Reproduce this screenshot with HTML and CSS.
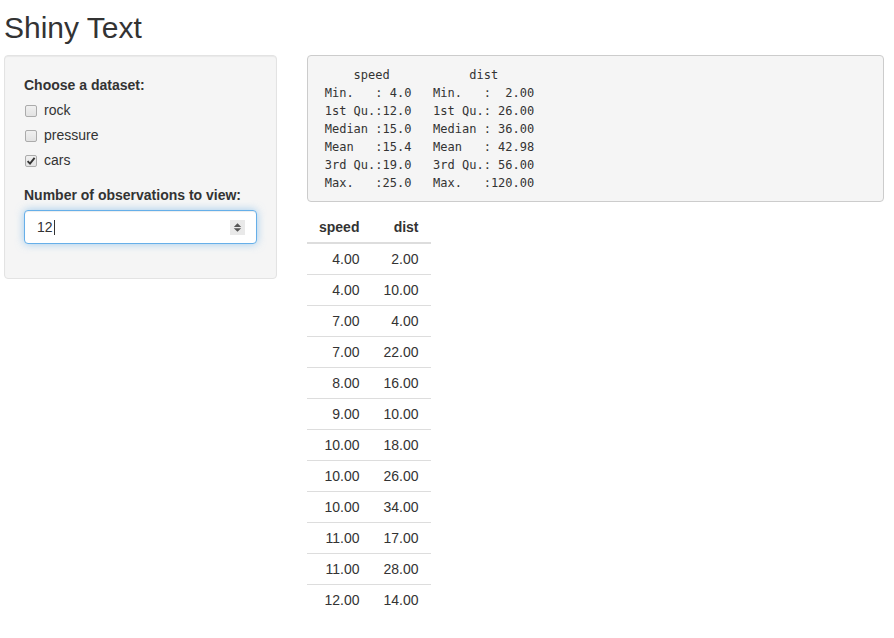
FILE: index.html
```html
<!DOCTYPE html>
<html>
<head>
<meta charset="utf-8">
<title>Shiny Text</title>
<link rel="stylesheet" href="styles.css">
</head>
<body>
<div class="page">
  <h2 class="title">Shiny Text</h2>
  <div class="row">
    <div class="sidebar well">
      <div class="form-group">
        <label class="control-label">Choose a dataset:</label>
        <div class="options">
          <label class="checkbox"><span class="box"></span><span>rock</span></label>
          <label class="checkbox"><span class="box"></span><span>pressure</span></label>
          <label class="checkbox"><span class="box checked"><svg width="10" height="10" viewBox="0 0 10 10"><path d="M1.6 5.2 L4 7.6 L8.6 1.8" fill="none" stroke="#333" stroke-width="1.9"/></svg></span><span>cars</span></label>
        </div>
      </div>
      <div class="form-group">
        <label class="control-label">Number of observations to view:</label>
        <div class="form-control">
          <span class="value">12</span><span class="caret"></span>
          <span class="spinner"><svg width="15" height="15" viewBox="0 0 15 15"><path d="M7.5 3.3 L11.2 7 L3.8 7 Z" fill="#555"/><path d="M7.5 11.8 L11.2 8.2 L3.8 8.2 Z" fill="#555"/></svg></span>
        </div>
      </div>
    </div>
    <div class="main">
<pre class="summary">     speed           dist       
 Min.   : 4.0   Min.   :  2.00  
 1st Qu.:12.0   1st Qu.: 26.00  
 Median :15.0   Median : 36.00  
 Mean   :15.4   Mean   : 42.98  
 3rd Qu.:19.0   3rd Qu.: 56.00  
 Max.   :25.0   Max.   :120.00  </pre>
      <table class="data-table">
        <thead>
          <tr><th>speed</th><th>dist</th></tr>
        </thead>
        <tbody>
          <tr><td>4.00</td><td>2.00</td></tr>
          <tr><td>4.00</td><td>10.00</td></tr>
          <tr><td>7.00</td><td>4.00</td></tr>
          <tr><td>7.00</td><td>22.00</td></tr>
          <tr><td>8.00</td><td>16.00</td></tr>
          <tr><td>9.00</td><td>10.00</td></tr>
          <tr><td>10.00</td><td>18.00</td></tr>
          <tr><td>10.00</td><td>26.00</td></tr>
          <tr><td>10.00</td><td>34.00</td></tr>
          <tr><td>11.00</td><td>17.00</td></tr>
          <tr><td>11.00</td><td>28.00</td></tr>
          <tr><td>12.00</td><td>14.00</td></tr>
        </tbody>
      </table>
    </div>
  </div>
</div>
</body>
</html>
```

FILE: styles.css
```css
* { box-sizing: border-box; }
html, body { margin: 0; padding: 0; background: #fff; }
body {
  font-family: "Liberation Sans", Arial, sans-serif;
  font-size: 14px;
  line-height: 20px;
  color: #333;
}
.page { padding: 0 10px 0 4px; }
.title {
  font-size: 30px;
  font-weight: 400;
  line-height: 33px;
  margin: 11px 0 11px 0;
  color: #333;
}
.row { display: flex; align-items: flex-start; gap: 30px; }
.well {
  width: 273px;
  background: #f5f5f5;
  border: 1px solid #e3e3e3;
  border-radius: 4px;
  box-shadow: inset 0 1px 1px rgba(0,0,0,.05);
  padding: 19px;
}
.form-group { margin-bottom: 15px; }
.control-label { display: block; font-weight: 700; margin-bottom: 5px; }
.options { display: flex; flex-direction: column; gap: 5px; margin-bottom: 10px; }
.checkbox {
  display: flex;
  align-items: center;
  height: 20px;
  padding-left: 20px;
  position: relative;
}
.box {
  width: 12px;
  height: 12px;
  margin-left: -19px;
  margin-right: 7px;
  margin-top: 1px;
  border: 1px solid #ababab;
  border-radius: 2px;
  background: linear-gradient(#f0f0f0, #e2e2e2);
  display: flex;
  align-items: center;
  justify-content: center;
}
.box svg { display: block; }
.form-control {
  height: 34px;
  width: 100%;
  display: flex;
  align-items: center;
  padding: 6px 11px 6px 12px;
  background: #fff;
  border: 1px solid #66afe9;
  border-radius: 4px;
  box-shadow: inset 0 1px 1px rgba(0,0,0,.075), 0 0 8px rgba(102,175,233,.6);
}
.caret { width: 1px; height: 15px; background: #333; margin-left: 1px; }
.spinner {
  margin-left: auto;
  width: 15px;
  height: 15px;
  background: #e9e9e9;
  display: block;
}
.spinner svg { display: block; }
.main { width: 577px; }
.summary {
  margin: 0 0 10px 0;
  padding: 9.5px;
  font-family: "DejaVu Sans Mono", "Liberation Mono", monospace;
  font-size: 12px;
  line-height: 18px;
  color: #333;
  background: #f5f5f5;
  border: 1px solid #ccc;
  border-radius: 4px;
  white-space: pre;
  overflow: hidden;
}
.data-table { border-collapse: collapse; border-spacing: 0; }
.data-table th, .data-table td {
  padding: 5px 12px;
  line-height: 20px;
  text-align: right;
}
.data-table th { font-weight: 700; border-bottom: 2px solid #ddd; }
.data-table td { border-top: 1px solid #ddd; }
```
